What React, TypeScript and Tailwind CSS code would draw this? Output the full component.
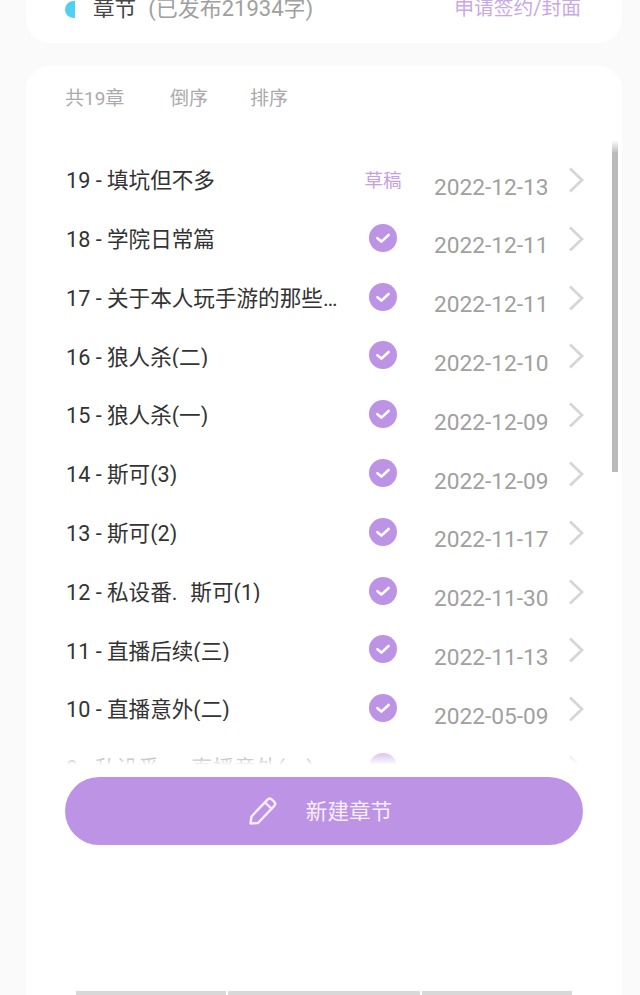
const FONT = "font-['Roboto','Noto_Sans_CJK_SC',sans-serif]";

type Chapter = { title: string; date: string; draft?: boolean };

const chapters: Chapter[] = [
  { title: '19 - 填坑但不多', date: '2022-12-13', draft: true },
  { title: '18 - 学院日常篇', date: '2022-12-11' },
  { title: '17 - 关于本人玩手游的那些事儿', date: '2022-12-11' },
  { title: '16 - 狼人杀(二)', date: '2022-12-10' },
  { title: '15 - 狼人杀(一)', date: '2022-12-09' },
  { title: '14 - 斯可(3)', date: '2022-12-09' },
  { title: '13 - 斯可(2)', date: '2022-11-17' },
  { title: '12 - 私设番.  \u200a斯可(1)', date: '2022-11-30' },
  { title: '11 - 直播后续(三)', date: '2022-11-13' },
  { title: '10 - 直播意外(二)', date: '2022-05-09' },
  { title: '9 - 私设番.    \u2009直播意外(一)', date: '2022-05-09' },
];

function CheckBadge() {
  return (
    <svg width="28" height="28" viewBox="0 0 28 28">
      <circle cx="14" cy="14" r="14" fill="#bd93e6" />
      <path d="M8.4 14.2l4 3.4 7.2-6.6" fill="none" stroke="#fff" strokeWidth="2.6" strokeLinecap="round" strokeLinejoin="round" />
    </svg>
  );
}

function Chevron() {
  return (
    <svg width="16" height="26" viewBox="0 0 16 26">
      <path d="M2 1.5L14 13 2 24.5" fill="none" stroke="#d6d6d6" strokeWidth="2.8" />
    </svg>
  );
}

function ChapterRow({ chapter }: { chapter: Chapter }) {
  return (
    <div className="flex h-[58.8px] items-center">
      <div className="w-[274px] truncate whitespace-pre pt-[2px] text-[21.6px] leading-none text-[#333]">{chapter.title}</div>
      <div className="flex w-[94px] justify-center pb-[2px] pr-[8px]">
        {chapter.draft ? (
          <span className="pt-[4px] text-[18.5px] leading-none text-[#c3a0e5]">草稿</span>
        ) : (
          <CheckBadge />
        )}
      </div>
      <div className="w-[134px] pt-[16px] text-[22.7px] leading-none text-[#a0a0a0]">{chapter.date}</div>
      <Chevron />
    </div>
  );
}

export default function App() {
  return (
    <div className={`h-[995px] w-[640px] overflow-hidden bg-[#fafafa] ${FONT}`}>
      <div className="mx-[26px] mt-[-30px] flex h-[73px] w-[596px] items-start justify-between rounded-[24px] bg-white pl-[39px] pr-[41px] pt-[27px]">
        <div className="flex items-center">
          <span className="mr-[18px] h-[17px] w-[10px] rounded-l-full bg-[#4fd0f0]" />
          <span className="text-[21.6px] leading-[24px] text-[#444]">章节</span>
          <span className="ml-[12px] text-[22px] leading-[24px] text-[#a0a0a0]">(已发布21934字)</span>
        </div>
        <span className="text-[19.8px] leading-[24px] text-[#c9a8e8]">申请签约/封面</span>
      </div>

      <div className="relative mx-[26px] mt-[23px] h-[960px] w-[596px] rounded-[24px] bg-white">
        <div className="flex h-[74px] items-start pl-[39px] pt-[22px] text-[19px] leading-[22px] text-[#aaa]">
          <span className="w-[105px]">共19章</span>
          <span className="w-[80px]">倒序</span>
          <span>排序</span>
        </div>

        <div className="relative h-[625px] overflow-hidden pl-[40px] pt-[10.6px]">
          {chapters.map((chapter) => (
            <ChapterRow key={chapter.title} chapter={chapter} />
          ))}
          <div className="absolute inset-x-0 bottom-0 h-[22px] bg-gradient-to-b from-white/0 to-white" />
        </div>

        {/* scrollbar thumb */}
        <div className="absolute left-[586px] top-[74px] h-[332px] w-[6px] bg-gradient-to-b from-white to-[#bbb] to-[4%]" />

        <button className="ml-[39px] mt-[12px] flex h-[68px] w-[518px] items-center justify-center rounded-full bg-[#bd93e6] pr-[8px] text-[21.6px] text-[#f6eefc]">
          <svg className="mr-[28px]" width="30" height="30" viewBox="0 0 30 30" fill="none" stroke="#f6eefc" strokeWidth="2.4" strokeLinejoin="round">
            <path d="M2.5 27.5l1-7L19.5 3.6a3 3 0 0 1 4.2-.2l2.4 2.2a3 3 0 0 1 .2 4.2L10 27z" />
            <path d="M17 6.5l6.8 6.4" />
          </svg>
          <span className="pt-[2px]">新建章节</span>
        </button>

        <div className="ml-[50px] mt-[146px] flex h-[4px] gap-[2px]">
          <div className="w-[150px] bg-[#d8d8d8]" />
          <div className="w-[192px] bg-[#d8d8d8]" />
          <div className="w-[150px] bg-[#d8d8d8]" />
        </div>
      </div>
    </div>
  );
}
